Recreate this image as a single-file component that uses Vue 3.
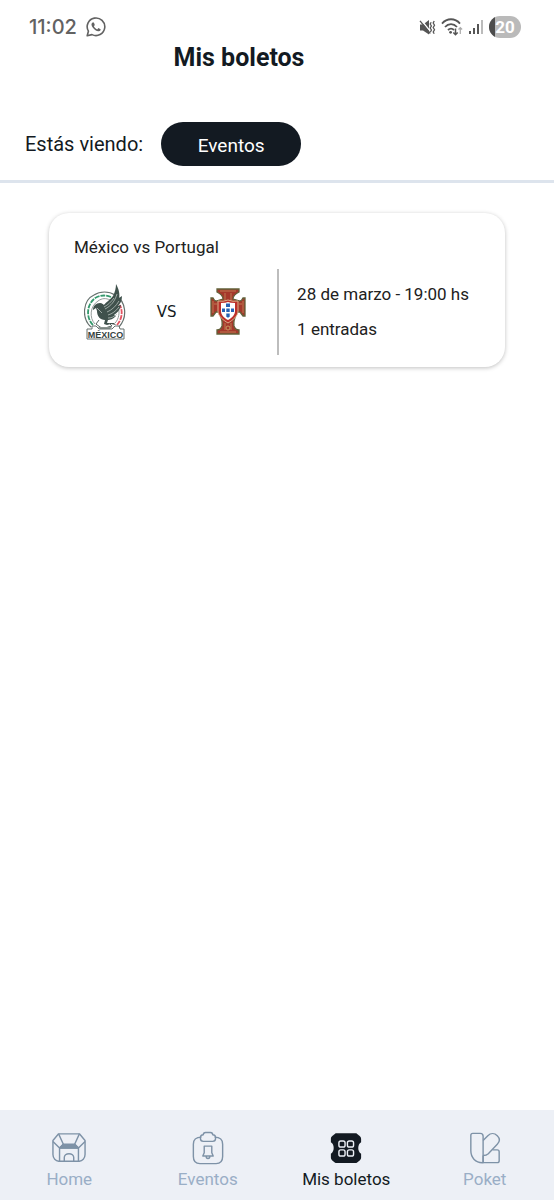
<script setup>
import { ref } from 'vue'

const BATTERY = 20

const tickets = [
  {
    id: 1,
    title: 'México vs Portugal',
    date: '28 de marzo - 19:00 hs',
    amount: 1
  }
]

const tabs = [
  { id: 'home', label: 'Home' },
  { id: 'events', label: 'Eventos' },
  { id: 'tickets', label: 'Mis boletos' },
  { id: 'poket', label: 'Poket' }
]

const activeTab = ref('tickets')
</script>

<template>
  <div class="screen">
    <div class="status">
      <div class="status-group">
        <span class="clock">11:02</span>
        <svg width="20" height="20" viewBox="0 0 20 20" fill="none" stroke="#626262" stroke-width="1.6">
          <path d="M1.2 18.8 2.4 14.2A8.8 8.8 0 1 1 6 17.6Z" stroke-linejoin="round" />
          <path d="M6.5 5.4c-1.5 1-1.3 2.9.2 5.1 1.8 2.6 4.2 4.1 6.2 3.8 1.3-.3 1.9-1.2 1.7-2.1l-2.2-1.1-1.2 1.3c-1.6-.6-2.7-1.8-3.3-3.1l.9-1.2-.9-2.5z" fill="#626262" stroke="none" />
        </svg>
      </div>
      <div class="status-group right">
        <svg width="17" height="17" viewBox="0 0 17 17" fill="none" stroke="#555" stroke-width="1.3">
          <path d="M1 5.5h3l6-4.4v14.5L4 11.5H1z" fill="#555" stroke="none" />
          <path d="M2 .8 12 13.2" stroke="#fff" stroke-width="1.4" />
          <path d="M1 1.8 11.3 14.5" />
          <path d="m12.2 3.2-1 1.8 1.2 2-1.2 2 1.2 2-1 2M15.2 2l-1 2 1.3 2.2-1.3 2.3 1.3 2.2-1.3 2.3 1 1.8" />
        </svg>
        <svg width="22" height="18" viewBox="0 0 22 18" fill="none" stroke="#555" stroke-width="1.8">
          <path d="M1 5.6C6-.2 14-.2 19 5.6M4 9c3.4-3.8 8.6-3.8 12 0M7 12c1.8-1.8 4.2-1.8 6 0" />
          <circle cx="9.6" cy="14.3" r="1.4" fill="#555" stroke="none" />
          <path d="M14.5 10.5v6M12.3 14.4l2.2 2.3 2.2-2.3" stroke-width="1.5" />
          <path d="M19.3 16V9.8M17.5 11.5l1.8-1.9 1.8 1.9" stroke="#aaa" stroke-width="1.2" />
        </svg>
        <svg width="16" height="16" viewBox="0 0 16 16">
          <path d="M1 12h2v3H1zM5 9h2v6H5zM9 5h2v10H9z" fill="#555" />
          <path d="M13 1h2v14h-2z" fill="#bbb" />
        </svg>
        <span class="battery"><span class="battery-level" :style="`width: ${BATTERY}%`"></span><span class="battery-value">{{ BATTERY }}</span></span>
      </div>
    </div>

    <header class="header">
      <h1 class="title">Mis boletos</h1>
    </header>

    <div class="filter">
      <span class="filter-label">Estás viendo:</span>
      <button type="button" class="pill">Eventos</button>
    </div>

    <main class="list">
      <article v-for="ticket in tickets" :key="ticket.id" class="card">
        <h2 class="card-title">{{ ticket.title }}</h2>
        <div class="card-body">
          <div class="match">
            <!-- México -->
            <svg class="crest" viewBox="0 0 42 56" role="img" aria-label="Escudo de México">
              <path d="M7 43C-3 34-1 16 10 11c6-4 15-4 21 0 11 6 13 22 4 32" fill="#fff" stroke="#66716e" stroke-width="1.2" />
              <path d="M9 41C1 33 3 18 13 13c5-2 9-2 14 0" fill="none" stroke="#35996d" stroke-width="1.8" stroke-dasharray="5 1" />
              <path d="M33 41c5-6 6-13 3-20" fill="none" stroke="#e35361" stroke-width="1.8" stroke-dasharray="5 1" />
              <path d="M11 40C5 34 6 22 14 17c4-3 8-3 12-1M31 39c4-4 5-11 3-16" fill="none" stroke="#78827f" stroke-width=".8" />
              <path d="M19 22c2-3 6-5 10-10C31 8 32 4 32 0c3 5 4 11 3 14l3-2c0 5-2 8-4 10l3-1c-1 5-4 8-7 10l2 1c-3 3-6 4-8 4l-1 3h7l2 2-5-1-4 1-3-1 1-4c-5 0-8-4-8-9l-1-3-3 2c0-4 3-7 7-7 2 0 4 2 4 2z" fill="#3f514c" />
              <path d="M21 25c6-3 10-8 12-15M23 28c5-2 9-6 12-11M24 31c4-1 8-4 11-8M24 34c3 0 6-1 9-4M20 23c4-2 7-5 10-9M13 24l5 5" fill="none" stroke="#b6c0bb" stroke-width=".8" />
              <path d="M15 36l-3 4 4 3 4 2 4-2 4-1-3-3" fill="none" stroke="#56635f" stroke-width="1" />
              <path d="M14 43h14l-3 3h-8z" fill="#89938f" />
              <path d="M3 45h5v-3h4l3 3h13l3-3h4l1 3h4v10H3z" fill="#fff" stroke="#66716e" />
              <text x="21.5" y="53.5" text-anchor="middle" class="crest-text">MÉXICO</text>
            </svg>
            <span class="versus">VS</span>
            <!-- Portugal -->
            <svg class="crest" viewBox="0 0 42 56" role="img" aria-label="Escudo de Portugal">
              <path d="M10 5h22v3c-4 2-6 4-6 7l7 2c2 0 2-2 3-3h2v18h-2l-3-4h-3c-2 5-4 9-3 14 1 3 2 4 5 4v4H10v-4c3 0 4-1 5-4 1-5-1-9-3-14H9l-3 4H4V14h2c1 1 1 3 3 3l7-2c0-3-2-5-6-7z" fill="#a5382b" stroke="#62613a" stroke-width="1.3" />
              <path d="M13 7h16M6 17v12M36 17v12M13 48h16M18 9v7M24 9v7M18 39v7M24 39v7M7 20h3M32 20h3" fill="none" stroke="#c99a62" stroke-width=".7" />
              <path d="M11 17q5 1 10-1 5 2 10 1v10c0 5-5 9-10 12-5-3-10-7-10-12z" fill="#bd3029" stroke="#d9b08a" />
              <path d="M14 19q5 0 7-1 2 1 7 1v8c0 4-3 7-7 9-4-2-7-5-7-9z" fill="#fff" />
              <path d="M19 19.5h4v3.5h-4zM15 24.5h3V28h-3zM19.3 24.5h3.4V28h-3.4zM24 24.5h3V28h-3zM19.3 29.5h3.4v3.2l-1.7 1-1.7-1z" fill="#2864b5" />
              <circle cx="21" cy="44" r="2" fill="none" stroke="#c99a62" />
            </svg>
          </div>
          <div class="info">
            <span>{{ ticket.date }}</span>
            <span>{{ ticket.amount }} entradas</span>
          </div>
        </div>
      </article>
    </main>

    <nav class="tabs">
      <a v-for="tab in tabs" :key="tab.id" href="#" class="tab" :class="{ active: tab.id === activeTab }" @click.prevent="activeTab = tab.id">
        <svg v-if="tab.id === 'home'" class="tab-icon" viewBox="0 0 36 36">
          <path d="M7 3h22l6 7v15c0 4-3 7-6 7H7c-3 0-6-3-6-7V10z" />
          <path d="M7 3l5 11-4 4-7-7M29 3l-5 11 4 4 7-7M8 18v14M28 18v14M8 18h20M13 32v-4c0-2 2-4 5-4s5 2 5 4v4" />
          <path d="M12 14h12l4 4H8z" fill="#7e92a7" />
        </svg>
        <svg v-else-if="tab.id === 'events'" class="tab-icon" viewBox="0 0 36 36">
          <path d="M11 6.500C5 6.500 2.500 9 2.500 14v13c0 5 3 7.500 7 7.500h17c4 0 7-2.500 7-7.500V14c0-5-2.500-7.500-8.500-7.500" />
          <path d="M13 4c0-1.500 1-2.500 2.500-2.500h5C22 1.500 23 2.500 23 4c2 0 3 1 3 3v1c0 2-1 3-3 3H13c-2 0-3-1-3-3V7c0-2 1-3 3-3z" />
          <path d="M14 16h8v7l1.500 3.500h-11L14 23zM16 26.500c0 3.500 4 3.500 4 0" />
        </svg>
        <svg v-else-if="tab.id === 'tickets'" class="tab-icon" viewBox="0 0 36 36">
          <path d="M7 2.500h22c2 2 5 3 5 6V12c-4 2-4 10 0 12v4c0 3-3 4-5 6H7c-2-2-5-3-5-6v-4c4-2 4-10 0-12V8.500c0-3 3-4 5-6z" fill="#131a22" stroke="none" />
          <g stroke="#edf0f6">
            <rect x="10.500" y="10.500" width="6.500" height="6.500" rx="2" />
            <rect x="19.500" y="10.500" width="6.500" height="6.500" rx="2" />
            <rect x="10.500" y="20" width="6.500" height="6.500" rx="2" />
            <rect x="19.500" y="20" width="6.500" height="6.500" rx="2" />
          </g>
        </svg>
        <svg v-else class="tab-icon" viewBox="0 0 36 36">
          <path d="M5 2.500h8c2 0 3 1 3 3v28C8 34 3 28 3 21V4.500c0-1 1-2 2-2z" />
          <path d="M16 10l5-5c3-3 7-3 10 0s3 6 0 9L21.500 24c-1.500 1.500-3 2-5.500 2" />
          <path d="M26 20h5c1 0 2 1 2 2v9.500c0 1-1 2-2 2H16V26" />
        </svg>
        <span>{{ tab.label }}</span>
      </a>
    </nav>
  </div>
</template>

<style>
body {
  margin: 0;
  background: #fff;
}
</style>

<style scoped>
.screen {
  display: flex;
  flex-direction: column;
  min-height: 100vh;
  color: #131a22;
  font-family: Roboto, "Liberation Sans", sans-serif;
}

.status {
  display: flex;
  align-items: center;
  justify-content: space-between;
  padding: 15px 33px 0 29px;
}

.status-group {
  display: flex;
  align-items: center;
  gap: 9px;
  height: 24px;
}

.status-group.right {
  gap: 5px;
}

.clock {
  color: #626262;
  font-family: Inter, Roboto, sans-serif;
  font-size: 20px;
  font-weight: 500;
}

.battery {
  position: relative;
  display: flex;
  align-items: center;
  justify-content: center;
  width: 32px;
  height: 22px;
  border-radius: 11px;
  background: #bababa;
  overflow: hidden;
}

.battery-level {
  position: absolute;
  top: 0;
  bottom: 0;
  left: 0;
  background: #4c4c4c;
}

.battery-value {
  position: relative;
  color: #fff;
  font-size: 17px;
  font-weight: 700;
}

.header {
  padding: 4px 76px 0 0;
  text-align: center;
}

.title {
  margin: 0;
  font-size: 25px;
  font-weight: 700;
  line-height: 30px;
}

.filter {
  display: flex;
  align-items: center;
  gap: 18px;
  padding: 49px 25px 14px;
  border-bottom: 3px solid #dde4ed;
}

.filter-label {
  font-size: 20px;
}

.pill {
  height: 44px;
  min-width: 140px;
  padding-top: 3px;
  border: 0;
  border-radius: 22px;
  background: #131a22;
  color: #fff;
  font-family: inherit;
  font-size: 19px;
}

.list {
  flex: 1;
  padding: 30px 49px;
}

.card {
  box-sizing: border-box;
  padding: 22px 25px 12px;
  border-radius: 20px;
  background: #fff;
  box-shadow: 0 1px 4px rgba(0, 0, 0, 0.25);
}

.card-title {
  margin: 0;
  color: #212121;
  font-size: 17px;
  font-weight: 400;
  line-height: 24px;
}

.card-body {
  display: flex;
  margin-top: 10px;
}

.match {
  display: flex;
  flex: 1;
  align-items: center;
  justify-content: space-between;
  padding: 0 28px 0 10px;
}

.crest {
  width: 42px;
  height: 56px;
}

.crest-text {
  fill: #34423e;
  font-family: "Liberation Sans", sans-serif;
  font-size: 9px;
  font-weight: 700;
}

.versus {
  font-family: "DejaVu Sans", sans-serif;
  font-size: 15px;
}

.info {
  display: flex;
  flex-direction: column;
  justify-content: center;
  gap: 11px;
  padding: 13px 11px 14px 18px;
  border-left: 2px solid #bdbdbd;
  color: #212121;
  font-size: 17px;
  line-height: 24px;
  white-space: nowrap;
}

.tabs {
  display: grid;
  grid-template-columns: repeat(4, 1fr);
  padding: 21px 0 9px;
  background: #edf0f6;
}

.tab {
  display: flex;
  flex-direction: column;
  align-items: center;
  gap: 2px;
  color: #9aaec6;
  font-size: 17px;
  line-height: 24px;
  text-decoration: none;
}

.tab.active {
  color: #131a22;
}

.tab-icon {
  width: 36px;
  height: 34px;
  fill: none;
  stroke: #7e92a7;
  stroke-width: 1.5;
  stroke-linejoin: round;
}
</style>
